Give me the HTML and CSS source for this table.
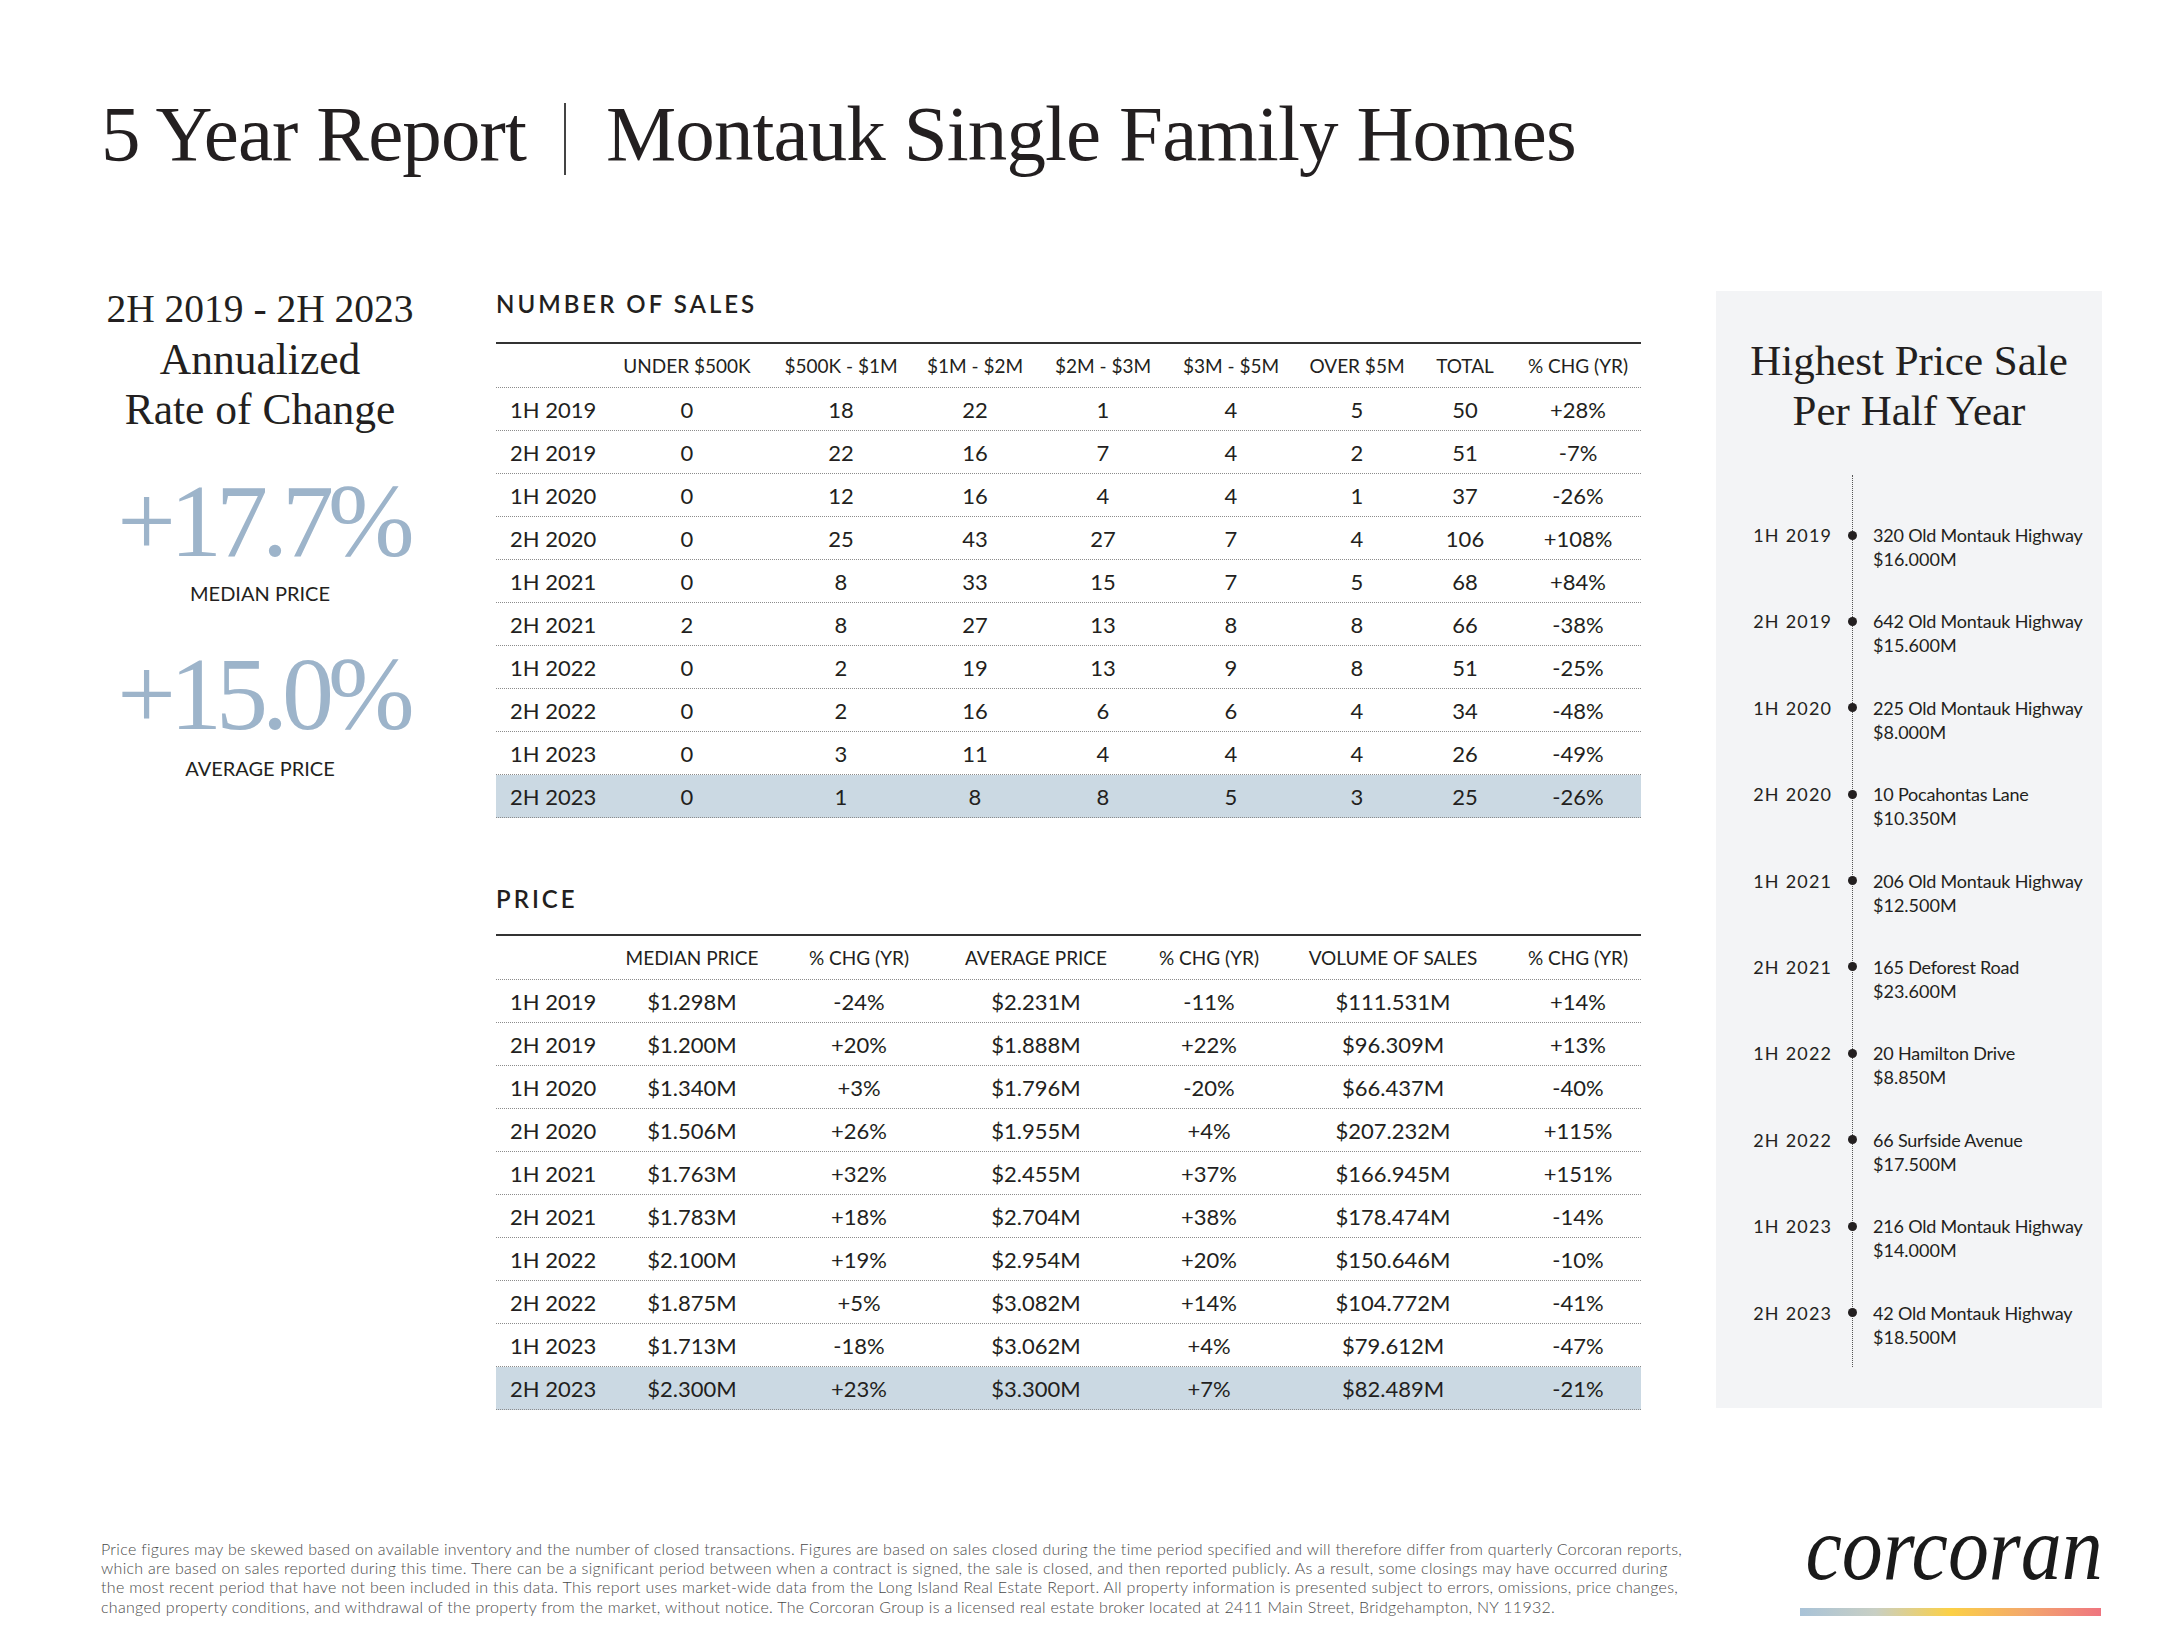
FILE: index.html
```html
<!DOCTYPE html>
<html lang="en">
<head>
<meta charset="utf-8">
<title>5 Year Report | Montauk Single Family Homes</title>
<link rel="stylesheet" href="styles.css">
</head>
<body>
<div class="page">
  <h1 class="title">5 Year Report<span class="divider"></span>Montauk Single Family Homes</h1>

  <div class="main">
    <section class="summary">
      <div class="range">2H 2019 - 2H 2023</div>
      <div class="range-sub">Annualized</div>
      <div class="range-sub">Rate of Change</div>
      <div class="big">+17.7%</div>
      <div class="big-label">MEDIAN PRICE</div>
      <div class="big big-2">+15.0%</div>
      <div class="big-label big-label-2">AVERAGE PRICE</div>
    </section>

    <section class="tables">
      <h2 class="section-title">NUMBER OF SALES</h2>
      <div class="table sales">
        <div class="trow thead"><span></span><span>UNDER $500K</span><span>$500K - $1M</span><span>$1M - $2M</span><span>$2M - $3M</span><span>$3M - $5M</span><span>OVER $5M</span><span>TOTAL</span><span>% CHG (YR)</span></div>
        <div class="trow"><span>1H 2019</span><span>0</span><span>18</span><span>22</span><span>1</span><span>4</span><span>5</span><span>50</span><span>+28%</span></div>
        <div class="trow"><span>2H 2019</span><span>0</span><span>22</span><span>16</span><span>7</span><span>4</span><span>2</span><span>51</span><span>-7%</span></div>
        <div class="trow"><span>1H 2020</span><span>0</span><span>12</span><span>16</span><span>4</span><span>4</span><span>1</span><span>37</span><span>-26%</span></div>
        <div class="trow"><span>2H 2020</span><span>0</span><span>25</span><span>43</span><span>27</span><span>7</span><span>4</span><span>106</span><span>+108%</span></div>
        <div class="trow"><span>1H 2021</span><span>0</span><span>8</span><span>33</span><span>15</span><span>7</span><span>5</span><span>68</span><span>+84%</span></div>
        <div class="trow"><span>2H 2021</span><span>2</span><span>8</span><span>27</span><span>13</span><span>8</span><span>8</span><span>66</span><span>-38%</span></div>
        <div class="trow"><span>1H 2022</span><span>0</span><span>2</span><span>19</span><span>13</span><span>9</span><span>8</span><span>51</span><span>-25%</span></div>
        <div class="trow"><span>2H 2022</span><span>0</span><span>2</span><span>16</span><span>6</span><span>6</span><span>4</span><span>34</span><span>-48%</span></div>
        <div class="trow"><span>1H 2023</span><span>0</span><span>3</span><span>11</span><span>4</span><span>4</span><span>4</span><span>26</span><span>-49%</span></div>
        <div class="trow hl"><span>2H 2023</span><span>0</span><span>1</span><span>8</span><span>8</span><span>5</span><span>3</span><span>25</span><span>-26%</span></div>
      </div>

      <h2 class="section-title price-title">PRICE</h2>
      <div class="table price">
        <div class="trow thead"><span></span><span>MEDIAN PRICE</span><span>% CHG (YR)</span><span>AVERAGE PRICE</span><span>% CHG (YR)</span><span>VOLUME OF SALES</span><span>% CHG (YR)</span></div>
        <div class="trow"><span>1H 2019</span><span>$1.298M</span><span>-24%</span><span>$2.231M</span><span>-11%</span><span>$111.531M</span><span>+14%</span></div>
        <div class="trow"><span>2H 2019</span><span>$1.200M</span><span>+20%</span><span>$1.888M</span><span>+22%</span><span>$96.309M</span><span>+13%</span></div>
        <div class="trow"><span>1H 2020</span><span>$1.340M</span><span>+3%</span><span>$1.796M</span><span>-20%</span><span>$66.437M</span><span>-40%</span></div>
        <div class="trow"><span>2H 2020</span><span>$1.506M</span><span>+26%</span><span>$1.955M</span><span>+4%</span><span>$207.232M</span><span>+115%</span></div>
        <div class="trow"><span>1H 2021</span><span>$1.763M</span><span>+32%</span><span>$2.455M</span><span>+37%</span><span>$166.945M</span><span>+151%</span></div>
        <div class="trow"><span>2H 2021</span><span>$1.783M</span><span>+18%</span><span>$2.704M</span><span>+38%</span><span>$178.474M</span><span>-14%</span></div>
        <div class="trow"><span>1H 2022</span><span>$2.100M</span><span>+19%</span><span>$2.954M</span><span>+20%</span><span>$150.646M</span><span>-10%</span></div>
        <div class="trow"><span>2H 2022</span><span>$1.875M</span><span>+5%</span><span>$3.082M</span><span>+14%</span><span>$104.772M</span><span>-41%</span></div>
        <div class="trow"><span>1H 2023</span><span>$1.713M</span><span>-18%</span><span>$3.062M</span><span>+4%</span><span>$79.612M</span><span>-47%</span></div>
        <div class="trow hl"><span>2H 2023</span><span>$2.300M</span><span>+23%</span><span>$3.300M</span><span>+7%</span><span>$82.489M</span><span>-21%</span></div>
      </div>
    </section>

    <aside class="sidebar">
      <h2 class="side-title">Highest Price Sale<br>Per Half Year</h2>
      <div class="timeline">
        <div class="entry"><span class="date">1H 2019</span><span class="dot"></span><span class="addr">320 Old Montauk Highway</span><span class="amt">$16.000M</span></div>
        <div class="entry"><span class="date">2H 2019</span><span class="dot"></span><span class="addr">642 Old Montauk Highway</span><span class="amt">$15.600M</span></div>
        <div class="entry"><span class="date">1H 2020</span><span class="dot"></span><span class="addr">225 Old Montauk Highway</span><span class="amt">$8.000M</span></div>
        <div class="entry"><span class="date">2H 2020</span><span class="dot"></span><span class="addr">10 Pocahontas Lane</span><span class="amt">$10.350M</span></div>
        <div class="entry"><span class="date">1H 2021</span><span class="dot"></span><span class="addr">206 Old Montauk Highway</span><span class="amt">$12.500M</span></div>
        <div class="entry"><span class="date">2H 2021</span><span class="dot"></span><span class="addr">165 Deforest Road</span><span class="amt">$23.600M</span></div>
        <div class="entry"><span class="date">1H 2022</span><span class="dot"></span><span class="addr">20 Hamilton Drive</span><span class="amt">$8.850M</span></div>
        <div class="entry"><span class="date">2H 2022</span><span class="dot"></span><span class="addr">66 Surfside Avenue</span><span class="amt">$17.500M</span></div>
        <div class="entry"><span class="date">1H 2023</span><span class="dot"></span><span class="addr">216 Old Montauk Highway</span><span class="amt">$14.000M</span></div>
        <div class="entry"><span class="date">2H 2023</span><span class="dot"></span><span class="addr">42 Old Montauk Highway</span><span class="amt">$18.500M</span></div>
      </div>
    </aside>
  </div>

  <footer class="footer">
    <p class="disclaimer">Price figures may be skewed based on available inventory and the number of closed transactions. Figures are based on sales closed during the time period specified and will therefore differ from quarterly Corcoran reports,<br>which are based on sales reported during this time. There can be a significant period between when a contract is signed, the sale is closed, and then reported publicly. As a result, some closings may have occurred during<br>the most recent period that have not been included in this data. This report uses market-wide data from the Long Island Real Estate Report. All property information is presented subject to errors, omissions, price changes,<br>changed property conditions, and withdrawal of the property from the market, without notice. The Corcoran Group is a licensed real estate broker located at 2411 Main Street, Bridgehampton, NY 11932.</p>
    <div class="logo">
      <div class="logo-word">corcoran</div>
      <div class="logo-bar"></div>
    </div>
  </footer>
</div>
</body>
</html>
```

FILE: styles.css
```css
html, body {
  margin: 0;
  padding: 0;
  background: #ffffff;
}

body {
  color: #231f20;
  font-family: Lato, "Noto Sans", sans-serif;
}

.page {
  width: 2169px;
  height: 1638px;
  box-sizing: border-box;
  padding: 96px 0 0 101px;
  overflow: hidden;
}

.title {
  margin: 0;
  height: 76px;
  font-family: "Liberation Serif", "Times New Roman", serif;
  font-weight: 400;
  font-size: 79px;
  line-height: 76px;
  letter-spacing: -0.9px;
  white-space: nowrap;
}

.divider {
  display: inline-block;
  width: 2px;
  height: 72px;
  background: #444;
  vertical-align: -15px;
  margin: 0 40px 0 38px;
}

.main {
  display: flex;
  align-items: flex-start;
  margin-top: 112px;
}

/* left summary column */
.summary {
  width: 318px;
  display: flex;
  flex-direction: column;
  align-items: center;
  text-align: center;
}

.range {
  font-family: "Liberation Serif", serif;
  font-size: 39.5px;
  line-height: 50px;
  white-space: nowrap;
}

.range-sub {
  font-family: "Liberation Serif", serif;
  font-size: 43.5px;
  line-height: 50px;
  white-space: nowrap;
}

.big {
  font-family: "Liberation Serif", serif;
  font-size: 104px;
  line-height: 104px;
  color: #9db4ca;
  letter-spacing: -6px;
  margin-top: 35px;
  padding-left: 6px;
  white-space: nowrap;
}

.big-2 {
  margin-top: 37px;
}

.big-label {
  font-size: 20px;
  line-height: 24px;
  margin-top: 8px;
}

.big-label-2 {
  margin-top: 10px;
}

/* tables */
.tables {
  width: 1145px;
  margin-left: 77px;
  padding-top: 6px;
}

.section-title {
  margin: 0 0 24px;
  font-size: 24px;
  line-height: 28px;
  font-weight: 600;
  letter-spacing: 3px;
}

.price-title {
  margin-top: 67px;
  margin-bottom: 21px;
}

.table {
  border-top: 2px solid #333;
}

.trow {
  display: grid;
  align-items: center;
  height: 43px;
  box-sizing: border-box;
  border-bottom: 1px dotted #8c8c8c;
  font-size: 22px;
  text-align: center;
  white-space: nowrap;
}

.thead {
  height: 44px;
  font-size: 19px;
}

.trow > span:first-child {
  text-align: left;
  padding-left: 14px;
}

.sales .trow {
  grid-template-columns: 103px 176px 132px 136px 120px 136px 116px 100px 126px;
}

.price .trow {
  grid-template-columns: 95px 202px 132px 222px 124px 244px 126px;
}

.hl {
  background: #cbd9e3;
}

/* sidebar */
.sidebar {
  width: 386px;
  margin-left: 75px;
  margin-top: 7px;
  box-sizing: border-box;
  padding: 44.5px 0 41px;
  background: #f3f4f6;
}

.side-title {
  margin: 0;
  font-family: "Liberation Serif", serif;
  font-weight: 400;
  font-size: 43px;
  line-height: 50px;
  text-align: center;
}

.timeline {
  position: relative;
  margin-top: 39.5px;
  padding: 48px 0 18.4px;
  display: flex;
  flex-direction: column;
  gap: 38.4px;
}

.timeline::before {
  content: "";
  position: absolute;
  left: 135.5px;
  top: 0;
  bottom: 0;
  border-left: 1.5px dotted #555;
}

.entry {
  display: grid;
  grid-template-columns: 115px 42px 1fr;
  font-size: 18px;
  line-height: 24px;
  white-space: nowrap;
}

.date {
  text-align: right;
  letter-spacing: 1.2px;
  margin-right: -1.2px;
}

.addr {
  letter-spacing: -0.2px;
}

.dot {
  width: 9px;
  height: 9px;
  border-radius: 50%;
  background: #231f20;
  justify-self: center;
  align-self: center;
  position: relative;
  z-index: 1;
}

.amt {
  grid-column: 3;
}

/* footer */
.footer {
  width: 2000px;
  display: flex;
  justify-content: space-between;
  align-items: flex-end;
  margin-top: 99px;
}

.disclaimer {
  margin: 0;
  font-size: 16px;
  line-height: 19.3px;
  font-weight: 300;
  letter-spacing: 0.3px;
  color: #4a4a4a;
  white-space: nowrap;
}

.logo {
  display: flex;
  flex-direction: column;
  align-items: flex-end;
}

.logo-word {
  font-family: "Liberation Serif", serif;
  font-style: italic;
  font-size: 90px;
  line-height: 80px;
  transform: scaleX(0.91);
  transform-origin: right center;
  margin-bottom: 19px;
  margin-right: -2px;
  color: #1a1a1a;
}

.logo-bar {
  width: 301px;
  height: 8px;
  background: linear-gradient(90deg, #a9c3d8 0%, #c8cfc4 25%, #fbd046 50%, #f3a86c 75%, #ef7580 100%);
}
```
